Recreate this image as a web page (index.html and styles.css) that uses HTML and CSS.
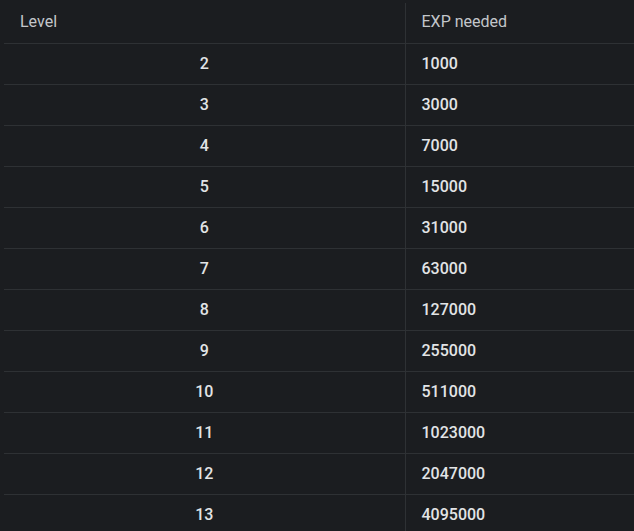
FILE: index.html
```html
<!DOCTYPE html>
<html>
<head>
<meta charset="utf-8">
<link rel="stylesheet" href="styles.css">
</head>
<body>
<table class="exp-table">
  <thead>
    <tr><th class="col-level">Level</th><th class="col-exp">EXP needed</th></tr>
  </thead>
  <tbody>
    <tr><td class="level">2</td><td class="exp">1000</td></tr>
    <tr><td class="level">3</td><td class="exp">3000</td></tr>
    <tr><td class="level">4</td><td class="exp">7000</td></tr>
    <tr><td class="level">5</td><td class="exp">15000</td></tr>
    <tr><td class="level">6</td><td class="exp">31000</td></tr>
    <tr><td class="level">7</td><td class="exp">63000</td></tr>
    <tr><td class="level">8</td><td class="exp">127000</td></tr>
    <tr><td class="level">9</td><td class="exp">255000</td></tr>
    <tr><td class="level">10</td><td class="exp">511000</td></tr>
    <tr><td class="level">11</td><td class="exp">1023000</td></tr>
    <tr><td class="level">12</td><td class="exp">2047000</td></tr>
    <tr><td class="level">13</td><td class="exp">4095000</td></tr>
  </tbody>
</table>
</body>
</html>
```
FILE: styles.css
```css
html, body {
  margin: 0;
  padding: 0;
  background: #1b1d20;
  overflow: hidden;
}
body {
  padding: 3px 0 0 4px;
  font-family: Roboto, "Liberation Sans", sans-serif;
}
.exp-table {
  border-collapse: collapse;
  width: 640px;
  table-layout: fixed;
}
.col-level { width: 401px; }
.exp-table th,
.exp-table td {
  height: 40px;
  padding: 0 16px;
  box-sizing: border-box;
  border-bottom: 1px solid #2e3134;
  vertical-align: middle;
  line-height: 18px;
  font-size: 16px;
}
.exp-table th {
  font-weight: 400;
  color: #c3c6ca;
  text-align: left;
  padding-bottom: 1px;
}
.exp-table td {
  height: 41px;
  font-weight: 500;
  color: #e2e4e6;
}
.exp-table th.col-level,
.exp-table td.level {
  border-right: 1px solid #2e3134;
}
.exp-table td.level {
  text-align: center;
}
.exp-table td.exp {
  text-align: left;
}
```
